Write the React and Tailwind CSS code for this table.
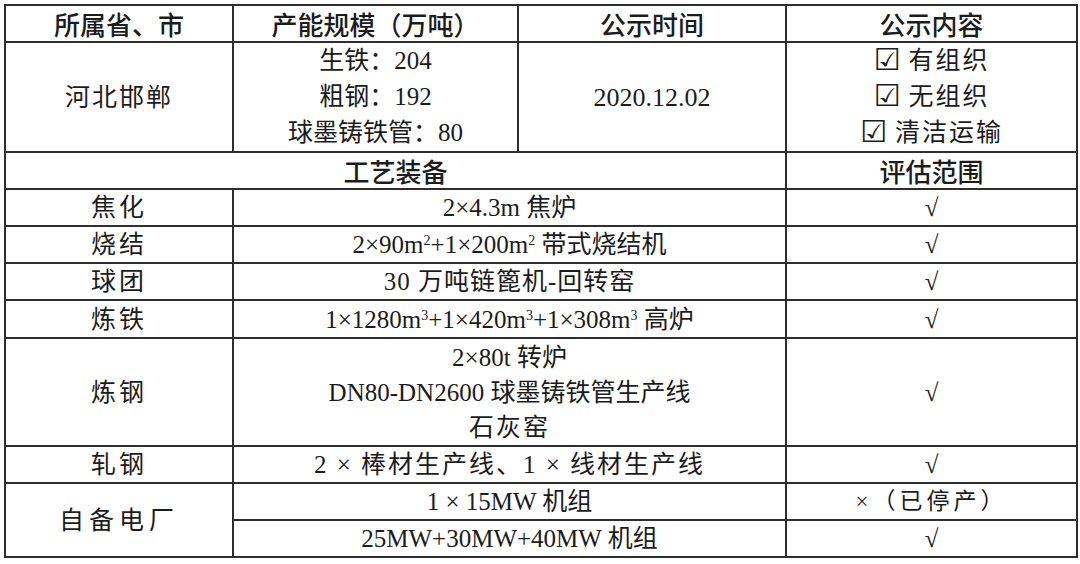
import React from 'react';

const body = { fontFamily: '"Liberation Serif", "Noto Sans CJK SC", serif' };
const head = { fontFamily: '"Noto Sans CJK SC", "Noto Sans", sans-serif' };
const box = { fontFamily: '"DejaVu Sans", "Noto Sans CJK SC", sans-serif' };

const cell = 'border-2 border-[#2e2e2e] text-center align-middle p-0 leading-[33px]';
const hcell = `${cell} font-medium text-[26px]`;

const M = ({ p }) => (
  <>
    m<sup className="text-[14px] align-top leading-none relative top-[6px]">{p}</sup>
  </>
);

const Check = ({ children }) => (
  <div className="leading-[36px]">
    <span style={box} className="text-[30px] leading-[30px] mr-[8px] relative top-[1px]">☑</span>
    <span className="tracking-[2px]">{children}</span>
  </div>
);

const Tick = () => <td className={cell}>√</td>;

export default function App() {
  return (
    <div className="bg-white w-[1080px] h-[564px] pt-[4px] pl-[4px] text-[#1c1c1c]">
      <table className="table-fixed border-collapse w-[1072px] text-[25px]" style={body}>
        <colgroup>
          <col className="w-[228px]" />
          <col className="w-[285px]" />
          <col className="w-[268px]" />
          <col className="w-[291px]" />
        </colgroup>
        <tbody>
          <tr className="h-[37px]" style={head}>
            <td className={hcell}>所属省、市</td>
            <td className={hcell}>产能规模（万吨）</td>
            <td className={hcell}>公示时间</td>
            <td className={hcell}>公示内容</td>
          </tr>
          <tr className="h-[109px]">
            <td className={`${cell} tracking-[2px]`}>河北邯郸</td>
            <td className={cell}>
              <div className="leading-[36px]">生铁：204</div>
              <div className="leading-[36px]">粗钢：192</div>
              <div className="leading-[36px]">球墨铸铁管：80</div>
            </td>
            <td className={`${cell} text-[26px]`}>2020.12.02</td>
            <td className={cell}>
              <Check>有组织</Check>
              <Check>无组织</Check>
              <Check>清洁运输</Check>
            </td>
          </tr>
          <tr className="h-[37px]" style={head}>
            <td colSpan={3} className={hcell}>工艺装备</td>
            <td className={hcell}>评估范围</td>
          </tr>
          <tr className="h-[37px]">
            <td className={`${cell} tracking-[3px]`}>焦化</td>
            <td colSpan={2} className={cell}>2×4.3m 焦炉</td>
            <Tick />
          </tr>
          <tr className="h-[37px]">
            <td className={`${cell} tracking-[3px]`}>烧结</td>
            <td colSpan={2} className={cell}>
              2×90<M p="2" />+1×200<M p="2" /> 带式烧结机
            </td>
            <Tick />
          </tr>
          <tr className="h-[37px]">
            <td className={`${cell} tracking-[3px]`}>球团</td>
            <td colSpan={2} className={`${cell} tracking-[1px]`}>30 万吨链篦机-回转窑</td>
            <Tick />
          </tr>
          <tr className="h-[38px]">
            <td className={`${cell} tracking-[3px]`}>炼铁</td>
            <td colSpan={2} className={cell}>
              1×1280<M p="3" />+1×420<M p="3" />+1×308<M p="3" /> 高炉
            </td>
            <Tick />
          </tr>
          <tr className="h-[108px]">
            <td className={`${cell} tracking-[3px]`}>炼钢</td>
            <td colSpan={2} className={cell}>
              <div className="leading-[35px]">2×80t 转炉</div>
              <div className="leading-[35px]">DN80-DN2600 球墨铸铁管生产线</div>
              <div className="leading-[35px] tracking-[2px]">石灰窑</div>
            </td>
            <Tick />
          </tr>
          <tr className="h-[37px]">
            <td className={`${cell} tracking-[3px]`}>轧钢</td>
            <td colSpan={2} className={`${cell} tracking-[2px]`}>2 × 棒材生产线、1 × 线材生产线</td>
            <Tick />
          </tr>
          <tr className="h-[37px]">
            <td rowSpan={2} className={`${cell} tracking-[5px]`}>自备电厂</td>
            <td colSpan={2} className={cell}>1 × 15MW 机组</td>
            <td className={`${cell} tracking-[4px] text-[23px]`}>×（已停产）</td>
          </tr>
          <tr className="h-[37px]">
            <td colSpan={2} className={cell}>25MW+30MW+40MW 机组</td>
            <Tick />
          </tr>
        </tbody>
      </table>
    </div>
  );
}
